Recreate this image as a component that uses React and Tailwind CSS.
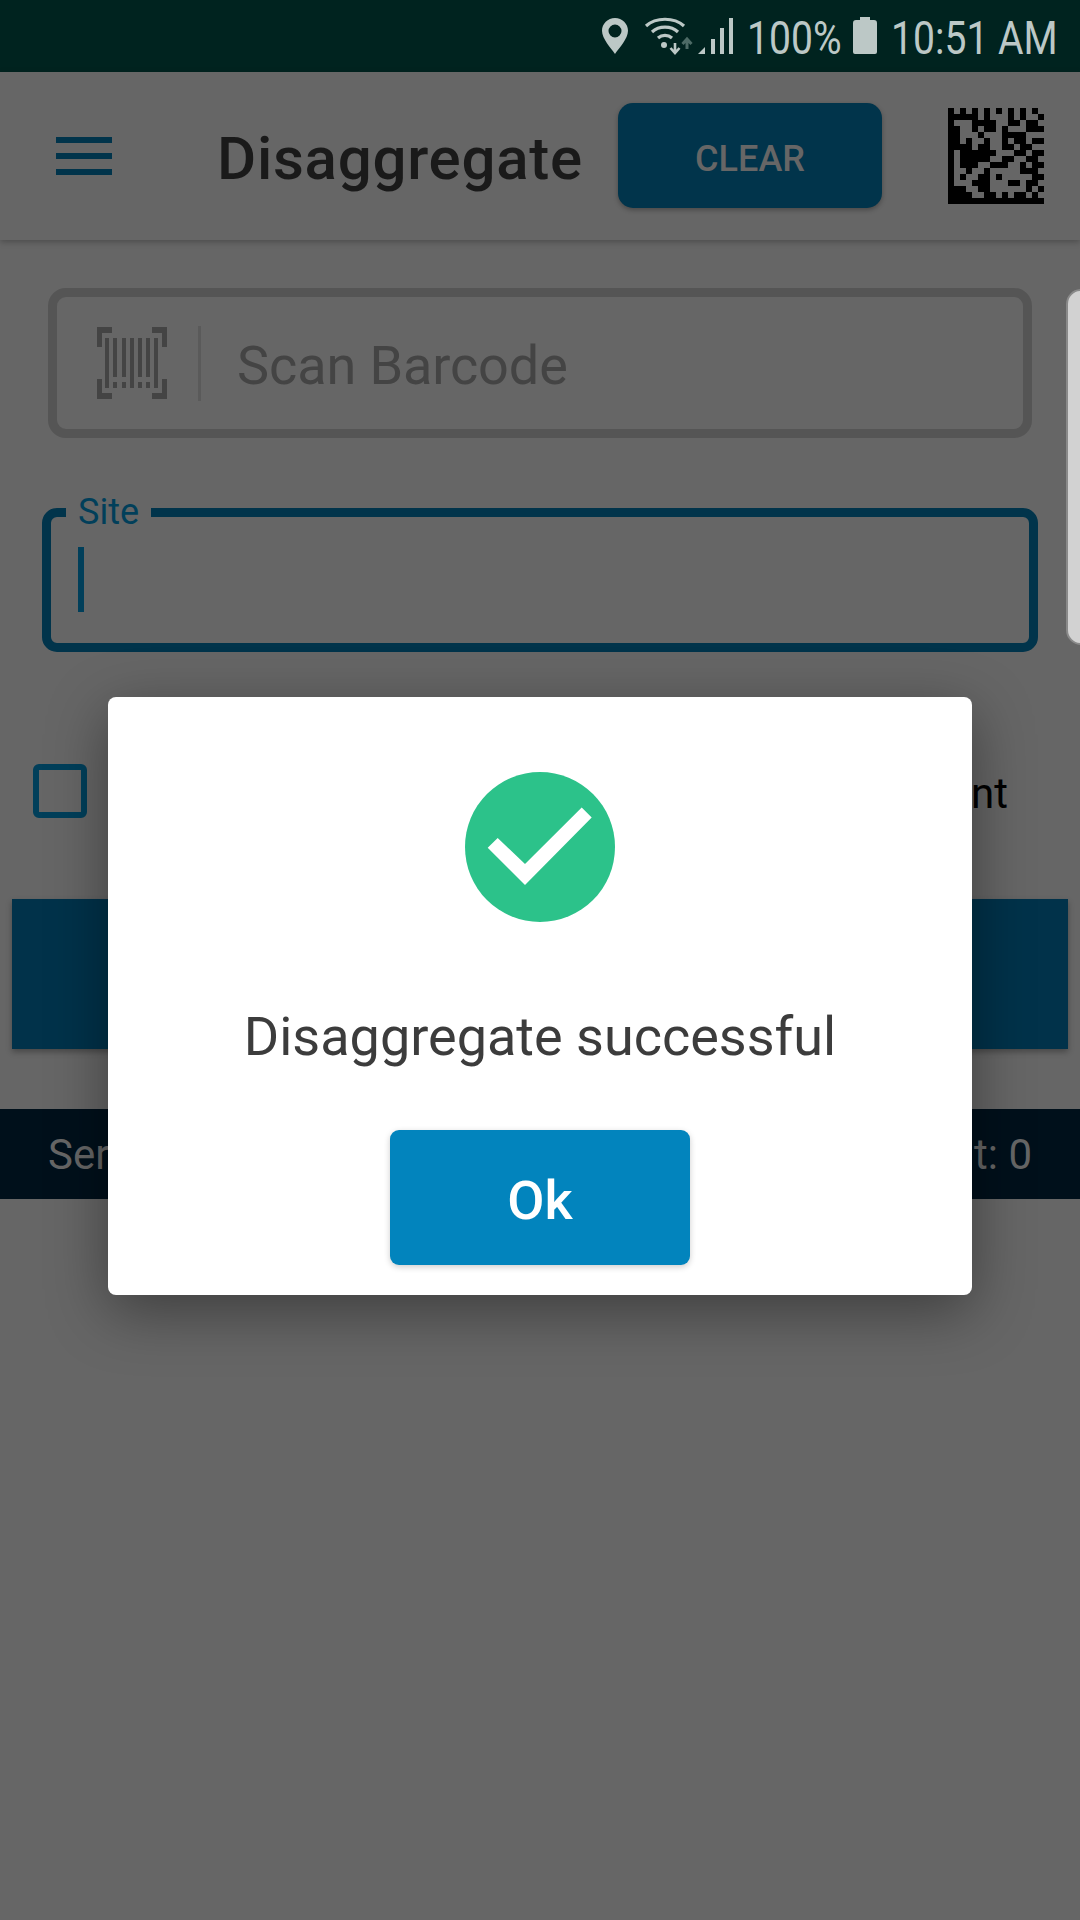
const MATRIX = [
  "1010101010101010",
  "1111101000101001",
  "1000111100110110",
  "1100101101000111",
  "1100010001111000",
  "1101001001011011",
  "1111011001101100",
  "1011111100011011",
  "1011111001100110",
  "1011100111001011",
  "1001001000001110",
  "1010011010000011",
  "1000111000110110",
  "1110011000000101",
  "1111001101011010",
  "1111111111111111",
];

function DataMatrix() {
  return (
    <svg width="96" height="96" viewBox="0 0 16 16" shapeRendering="crispEdges">
      {MATRIX.map((row, y) =>
        row.split("").map((c, x) =>
          c === "1" ? <rect key={x + "-" + y} x={x} y={y} width="1" height="1" fill="#000" /> : null
        )
      )}
    </svg>
  );
}

function BarcodeIcon() {
  const c = "#444444";
  return (
    <svg width="70" height="72" viewBox="0 0 70 72" fill={c} shapeRendering="crispEdges">
      <path d="M0 0h15v6H5v14H0zM70 0H55v6h10v14h5zM0 72h15v-6H5V52H0zM70 72H55v-6h10V52h5z" />
      <rect x="8" y="11" width="4" height="50" />
      <rect x="16" y="11" width="4" height="39" />
      <rect x="16" y="55" width="4" height="6" />
      <rect x="25" y="11" width="4" height="39" />
      <rect x="25" y="55" width="4" height="6" />
      <rect x="33" y="11" width="4" height="50" />
      <rect x="41" y="11" width="4" height="39" />
      <rect x="41" y="55" width="4" height="6" />
      <rect x="49" y="11" width="4" height="39" />
      <rect x="49" y="55" width="4" height="6" />
      <rect x="57" y="11" width="4" height="50" />
    </svg>
  );
}

function PinIcon() {
  return (
    <svg width="26" height="36" viewBox="0 0 26 36">
      <path
        fillRule="evenodd"
        fill="#bcc8c6"
        d="M13 0C5.8 0 0 5.7 0 12.8 0 21 9 30 13 36c4-6 13-15 13-23.2C26 5.7 20.2 0 13 0zm0 6.5a6.5 6.5 0 1 1 0 13 6.5 6.5 0 0 1 0-13z"
      />
    </svg>
  );
}

function WifiIcon() {
  return (
    <svg width="50" height="38" viewBox="0 0 50 38" fill="none">
      <path d="M2 9C12 0 30 0 40 9" stroke="#bcc8c6" strokeWidth="3.2" />
      <path d="M8 15C15 8.5 27 8.5 34 15" stroke="#bcc8c6" strokeWidth="3.2" />
      <path d="M14 21C18 17.5 24 17.5 28 21" stroke="#bcc8c6" strokeWidth="3.2" />
      <circle cx="20" cy="28" r="3" fill="#bcc8c6" />
      <path d="M31 26v8M26.5 31l4.5 5 4.5-5" stroke="#bcc8c6" strokeWidth="2.6" />
      <path d="M43 32v-9M38.5 27l4.5-5 4.5 5" stroke="#4d6b66" strokeWidth="3" />
    </svg>
  );
}

function SignalIcon() {
  return (
    <svg width="36" height="36" viewBox="0 0 36 36" fill="#bcc8c6">
      <path d="M0 36L7 29V36z" />
      <rect x="13" y="21" width="4" height="15" />
      <rect x="22" y="10" width="4" height="26" />
      <rect x="31" y="0" width="4" height="36" />
    </svg>
  );
}

function CheckCircle() {
  return (
    <svg width="150" height="150" viewBox="0 0 150 150">
      <circle cx="75" cy="75" r="75" fill="#2cc28a" />
      <path d="M22.7 75.7L32.7 66L60 92L116.7 35.5L126.7 45.4L60 113z" fill="#fff" />
    </svg>
  );
}

export default function App() {
  return (
    <div className="relative w-[1080px] h-[1920px] overflow-hidden bg-[#666666] font-['Roboto',sans-serif]">
      <div className="h-[72px] bg-[#00231f] flex items-center justify-end pr-[23px] text-[#bcc8c6]">
        <div className="flex items-center">
          <PinIcon />
          <div className="ml-[16px]"><WifiIcon /></div>
          <div className="ml-[4px]"><SignalIcon /></div>
          <span className="ml-[13px] mt-[4px] w-[94px] text-[46px] leading-[72px] whitespace-nowrap scale-x-[0.85] origin-left">100%</span>
          <svg className="ml-[12px] -mt-[1px]" width="24" height="37" viewBox="0 0 24 36" fill="#bcc8c6" preserveAspectRatio="none">
            <path d="M7 0h10v3h4a3 3 0 0 1 3 3v28a2 2 0 0 1-2 2H2a2 2 0 0 1-2-2V6a3 3 0 0 1 3-3h4z" />
          </svg>
          <span className="ml-[14px] mt-[4px] w-[166px] text-[46px] leading-[72px] whitespace-nowrap scale-x-[0.85] origin-left">10:51 AM</span>
        </div>
      </div>

      <div className="relative h-[168px] flex items-center shadow-[0_2px_6px_rgba(0,0,0,0.25)]">
        <div className="ml-[56px] w-[56px] flex flex-col gap-[10px]">
          <div className="h-[6px] bg-[#01344b]" />
          <div className="h-[6px] bg-[#01344b]" />
          <div className="h-[6px] bg-[#01344b]" />
        </div>
        <div className="ml-[105px] mt-[5px] w-[401px] text-[60px] leading-[70px] font-medium text-[#1a1a1a] tracking-[0.75px] whitespace-nowrap">
          Disaggregate
        </div>
        <button className="-mt-[1px] pt-[6px] w-[264px] h-[105px] rounded-[15px] bg-[#01344b] text-[#666666] text-[36px] font-medium shadow-[0_2px_5px_rgba(0,0,0,0.3)]">
          CLEAR
        </button>
        <div className="ml-[66px]"><DataMatrix /></div>
      </div>

      <div className="mt-[48px] ml-[48px] w-[984px] h-[150px] border-[9px] border-[#555555] rounded-[18px] flex items-center">
        <div className="ml-[40px]"><BarcodeIcon /></div>
        <div className="ml-[31px] w-[3px] h-[75px] bg-[#5a5a5a]" />
        <span className="ml-[36px] mt-[6px] text-[54px] leading-[64px] tracking-[-0.1px] text-[#444444]">Scan Barcode</span>
      </div>

      <div className="relative mt-[70px] ml-[42px] w-[996px] h-[144px] border-[9px] border-[#01344b] rounded-[15px]">
        <span className="absolute left-[15px] -top-[23px] px-[12px] pb-[5px] bg-[#666666] text-[36px] leading-[36px] text-[#013f5a]">Site</span>
        <div className="ml-[27px] mt-[30px] w-[6px] h-[65px] bg-[#013f5a]" />
      </div>

      <div className="mt-[112px] ml-[33px] w-[975px] h-[54px] flex items-center justify-between">
        <div className="w-[54px] h-[54px] border-[6px] border-[#013f5a] rounded-[6px]" />
        <span className="mt-[5px] text-[42px] leading-[54px] text-[#000000]">Parent</span>
      </div>

      <div className="mt-[81px] mx-[12px] h-[150px] bg-[#01324a] shadow-[0_3px_6px_rgba(0,0,0,0.3)]" />

      <div className="mt-[60px] h-[90px] bg-[#00101b] flex items-center justify-between pl-[48px] pr-[48px] text-[42px] text-[#666666]">
        <span>Serial</span>
        <span>Count: 0</span>
      </div>

      <div className="absolute left-[1066px] top-[289px] w-[30px] h-[356px] bg-[#d2d2d2] border-2 border-[#8a8a8a] rounded-[18px]" />

      <div className="absolute left-[108px] top-[697px] w-[864px] h-[598px] bg-white rounded-[8px] shadow-[0_16px_60px_rgba(0,0,0,0.4)] flex flex-col items-center">
        <div className="mt-[75px]"><CheckCircle /></div>
        <div className="mt-[80px] text-[54px] leading-[70px] text-[#3c3c3c] whitespace-nowrap">Disaggregate successful</div>
        <button className="mt-[58px] pt-[5px] w-[300px] h-[135px] rounded-[9px] bg-[#0284bd] text-white text-[54px] font-medium shadow-[0_2px_6px_rgba(0,0,0,0.2)]">
          Ok
        </button>
      </div>
    </div>
  );
}
